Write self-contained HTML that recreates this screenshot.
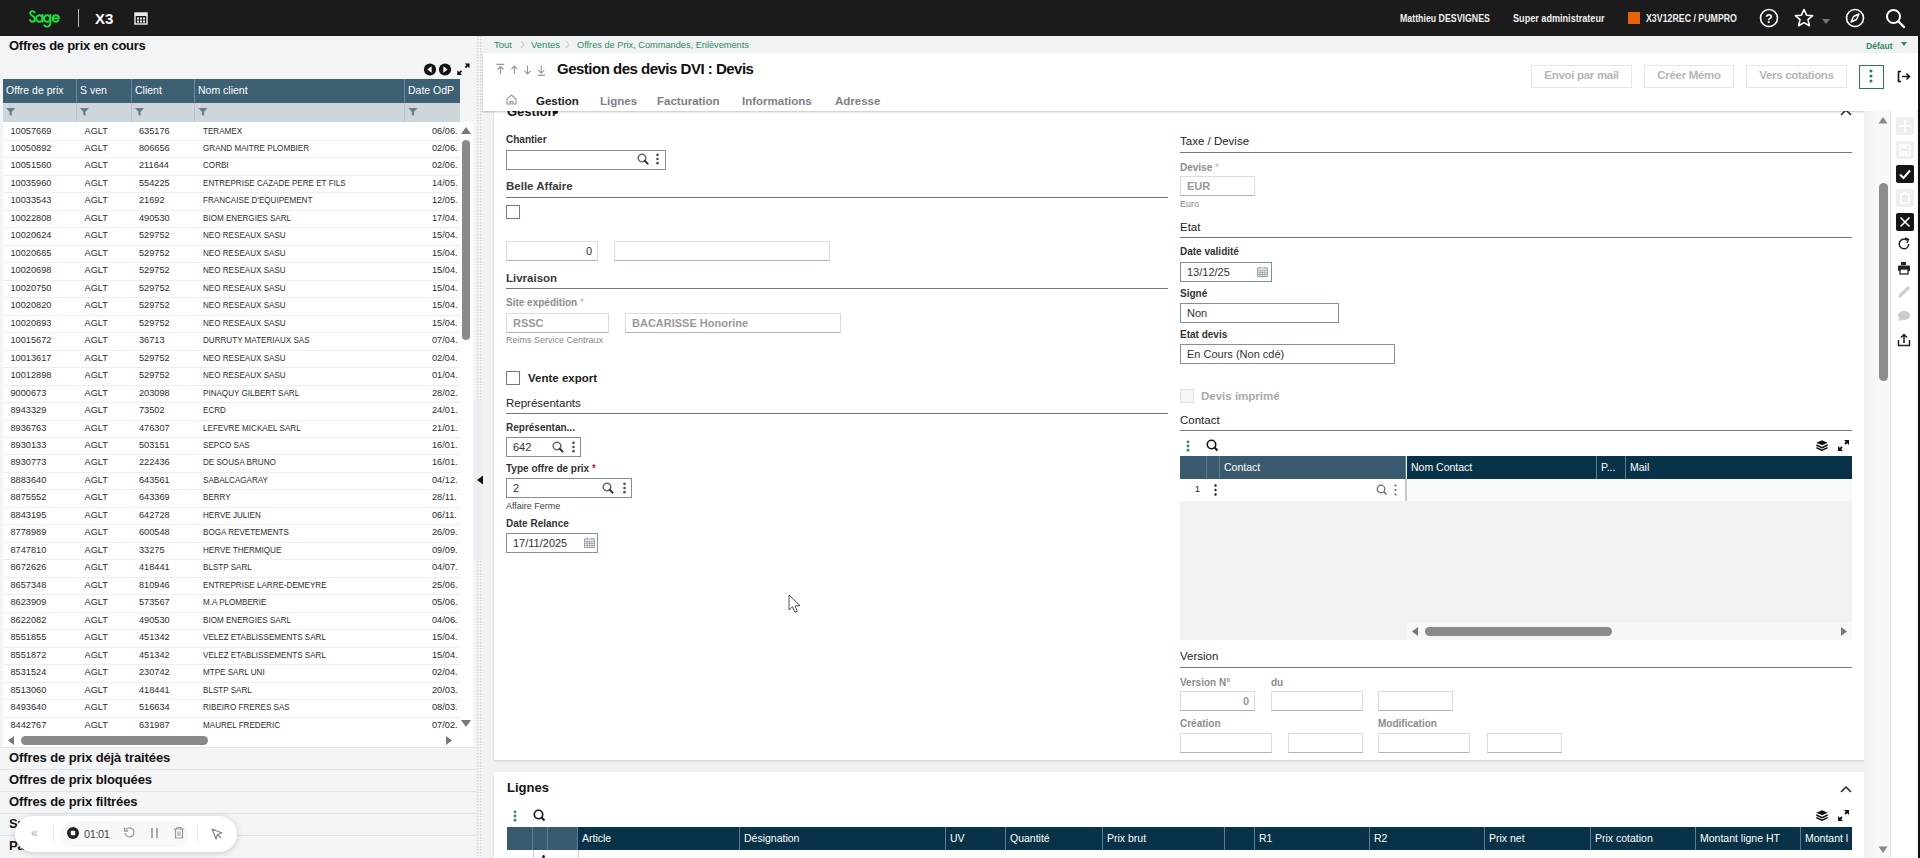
<!DOCTYPE html>
<html><head><meta charset="utf-8">
<style>
*{box-sizing:border-box;margin:0;padding:0}
html,body{width:1920px;height:858px;overflow:hidden;background:#f2f3f4;font-family:"Liberation Sans",sans-serif;color:#222;position:relative}
.abs{position:absolute}
#top{position:absolute;left:0;top:0;width:1920px;height:36px;background:#1b1b1b}
#left{position:absolute;left:0;top:36px;width:476px;height:822px;background:#f3f4f6}
.lr{position:absolute;left:3px;width:457px;height:17.47px;background:#fff;border-bottom:1px solid #eceeef;font-size:9.2px;color:#2c2c2c;line-height:14.5px}
.lr span{position:absolute;top:0;white-space:nowrap}
.c1{left:7.5px}.c2{left:81.5px}.c3{left:136px}.c4{left:200px;transform:scaleX(0.88);transform-origin:0 0}.c5{left:429px}
.th{position:absolute;top:79px;height:24px;background:#3e6074;color:#fff;font-size:10.5px;line-height:23px;padding-left:3px;border-right:1px solid #6d8795}
.tf{position:absolute;top:103px;height:19px;background:#cfd6db;border-right:1px solid #b9c3c9}
.sec{position:absolute;left:0;width:476px;height:22px;border-top:1px solid #e1e3e6;font-weight:bold;font-size:13px;line-height:19px;padding-left:9px;color:#111;letter-spacing:-0.1px}
</style></head><body>
<style>
.btn{border:1px solid #e4e6e8;color:#b3b6b9;font-size:11.5px;font-weight:bold;text-align:center;line-height:19px;background:#fff;white-space:nowrap;letter-spacing:-0.3px}
.tab{top:94.5px;font-size:11.5px;font-weight:bold;color:#7c8186;white-space:nowrap}
.lbl{position:absolute;margin-top:1px;font-size:10px;font-weight:bold;color:#333;white-space:nowrap}
.glbl{position:absolute;margin-top:1px;font-size:10px;font-weight:bold;color:#8c8c8c;white-space:nowrap}
.sect{position:absolute;margin-top:1px;font-size:11.5px;color:#222;white-space:nowrap}
.hr{position:absolute;height:1px;background:#777}
.inp{position:absolute;height:20px;border:1px solid #7f9099;border-bottom-width:1.5px;background:#fff;font-size:11px;color:#333;line-height:18px;padding-left:6px;white-space:nowrap}
.ginp{position:absolute;height:20px;border:1px solid #d8dde0;border-bottom:1.5px solid #a9b6bc;background:#fff;font-size:11px;color:#999;font-weight:bold;line-height:18px;padding-left:6px;white-space:nowrap}
.sub{position:absolute;font-size:9px;color:#888;white-space:nowrap}
.cb{position:absolute;width:14px;height:14px;border:1px solid #6d7d86;background:#fff}
</style>
<style>
.gh{position:absolute;top:456px;height:23px;background:#083248;color:#fff;font-size:10.5px;line-height:22px;padding-left:4px;border-right:1px solid #5d7d8e;white-space:nowrap}
.gh2{position:absolute;top:827px;height:23px;background:#083248;color:#fff;font-size:10.5px;line-height:22px;padding-left:4px;border-right:1px solid #5d7d8e;white-space:nowrap}
.tb{position:absolute;left:1896px;width:18px;height:18px;border-radius:2px;overflow:hidden}
.tb svg{display:block}
</style>

<div id="top">
  <svg class="abs" style="left:29px;top:10px" width="31" height="19" viewBox="0 0 31 19"><g fill="none" stroke="#1ee03c" stroke-width="1.9" stroke-linecap="round"><path d="M5.6 2.6 C5.2 1.6 4.4 1.1 3.4 1.1 C2.1 1.1 1.2 2 1.2 3.2 C1.2 4.5 2.3 5.2 3.5 5.9 C4.8 6.6 5.9 7.4 5.9 9.1 C5.9 10.7 4.8 11.8 3.5 11.8 C2.2 11.8 1.3 11 1.1 9.9"/><circle cx="10.4" cy="8.5" r="3.2"/><path d="M13.6 5 V11.8"/><circle cx="18.2" cy="8.5" r="3.2"/><path d="M21.4 5 V12.8 C21.4 15 20 16.6 18 16.6 C16.8 16.6 15.8 16 15.3 15.2"/><path d="M23.7 8.4 H29.9 C29.9 6.6 28.5 5.2 26.8 5.2 C25.1 5.2 23.7 6.6 23.7 8.5 C23.7 10.3 25.1 11.7 26.8 11.7 C27.9 11.7 28.8 11.2 29.4 10.4"/></g></svg>
  <div class="abs" style="left:78px;top:9px;width:1px;height:18px;background:#bbb"></div>
  <div class="abs" style="left:95px;top:10px;font-size:15px;font-weight:bold;color:#fff">X3</div>
  <svg class="abs" style="left:134px;top:11px" width="14" height="14" viewBox="0 0 14 14"><rect x="1" y="2" width="12" height="11" fill="none" stroke="#eee" stroke-width="1.4"/><rect x="1" y="2" width="12" height="3" fill="#eee"/><g fill="#eee"><rect x="3" y="6.5" width="2" height="2"/><rect x="6" y="6.5" width="2" height="2"/><rect x="9" y="6.5" width="2" height="2"/><rect x="3" y="9.5" width="2" height="2"/><rect x="6" y="9.5" width="2" height="2"/><rect x="9" y="9.5" width="2" height="2"/></g></svg>
  <div class="abs" style="left:1400px;top:13px;font-size:10px;color:#eee;font-weight:bold;transform:scaleX(0.88);transform-origin:0 0;white-space:nowrap">Matthieu DESVIGNES</div>
  <div class="abs" style="left:1513px;top:13px;font-size:10px;color:#eee;font-weight:bold;transform:scaleX(0.91);transform-origin:0 0;white-space:nowrap">Super administrateur</div>
  <div class="abs" style="left:1628px;top:12px;width:12px;height:12px;background:#e8620a"></div>
  <div class="abs" style="left:1646px;top:13px;font-size:10px;color:#eee;font-weight:bold;transform:scaleX(0.88);transform-origin:0 0;white-space:nowrap">X3V12REC / PUMPRO</div>
  <svg class="abs" style="left:1759px;top:8px" width="20" height="20" viewBox="0 0 20 20"><circle cx="10" cy="10" r="8.5" fill="none" stroke="#fff" stroke-width="1.6"/><text x="10" y="14.5" text-anchor="middle" font-size="12" font-weight="bold" fill="#fff" font-family="Liberation Sans">?</text></svg>
  <svg class="abs" style="left:1794px;top:8px" width="20" height="20" viewBox="0 0 20 20"><path d="M10 1.5 L12.6 7.2 L18.6 7.6 L14 11.6 L15.4 17.8 L10 14.6 L4.6 17.8 L6 11.6 L1.4 7.6 L7.4 7.2 Z" fill="none" stroke="#fff" stroke-width="1.6" stroke-linejoin="round"/></svg>
  <svg class="abs" style="left:1822px;top:19px" width="8" height="5" viewBox="0 0 8 5"><path d="M0 0 L8 0 L4 5Z" fill="#777"/></svg>
  <svg class="abs" style="left:1845px;top:8px" width="20" height="20" viewBox="0 0 20 20"><circle cx="10" cy="10" r="8.5" fill="none" stroke="#fff" stroke-width="1.6"/><path d="M14 6 L11.5 11.5 L6 14 L8.5 8.5 Z" fill="none" stroke="#fff" stroke-width="1.4" stroke-linejoin="round"/></svg>
  <svg class="abs" style="left:1885px;top:8px" width="21" height="21" viewBox="0 0 21 21"><circle cx="8.5" cy="8.5" r="6.5" fill="none" stroke="#fff" stroke-width="2"/><path d="M13.5 13.5 L19 19" stroke="#fff" stroke-width="2.4" stroke-linecap="round"/></svg>
</div>

<div id="left">
  <div class="abs" style="left:9px;top:2px;font-size:13px;font-weight:bold;color:#111;letter-spacing:-0.25px">Offres de prix en cours</div>
  <svg class="abs" style="left:422px;top:26px" width="52" height="16" viewBox="0 0 52 16">
    <circle cx="8" cy="7.5" r="6.1" fill="#111"/><path d="M9.6 4.3 L5.4 7.5 L9.6 10.7Z" fill="#fff"/>
    <circle cx="23" cy="7.5" r="6.1" fill="#111"/><path d="M21.4 4.3 L25.6 7.5 L21.4 10.7Z" fill="#fff"/>
    <path d="M35.3 13 L40 13 L35.3 8.3 Z" fill="#111"/><path d="M36 12.3 L39.5 8.8" stroke="#111" stroke-width="1.8"/>
    <path d="M47.5 1.5 L42.8 1.5 L47.5 6.2 Z" fill="#111"/><path d="M46.8 2.2 L43.3 5.7" stroke="#111" stroke-width="1.8"/>
  </svg>
</div>
<div class="th" style="left:3px;width:74px">Offre de prix</div>
<div class="th" style="left:77px;width:55px">S ven</div>
<div class="th" style="left:132px;width:63px">Client</div>
<div class="th" style="left:195px;width:210px">Nom client</div>
<div class="th" style="left:405px;width:55px;border-right:none">Date OdP</div>
<div class="tf" style="left:3px;width:74px"></div>
<div class="tf" style="left:77px;width:55px"></div>
<div class="tf" style="left:132px;width:63px"></div>
<div class="tf" style="left:195px;width:210px"></div>
<div class="tf" style="left:405px;width:55px;border-right:none"></div>

<div id="rowsbg" class="abs" style="left:3px;top:122px;width:470px;height:625px;background:#fff"></div>

<div class="lr" style="top:123.53px"><span class="c1">10057669</span><span class="c2">AGLT</span><span class="c3">635176</span><span class="c4">TERAMEX</span><span class="c5">06/06.</span></div>
<div class="lr" style="top:141.00px"><span class="c1">10050892</span><span class="c2">AGLT</span><span class="c3">806656</span><span class="c4">GRAND MAITRE PLOMBIER</span><span class="c5">02/06.</span></div>
<div class="lr" style="top:158.47px"><span class="c1">10051560</span><span class="c2">AGLT</span><span class="c3">211644</span><span class="c4">CORBI</span><span class="c5">02/06.</span></div>
<div class="lr" style="top:175.94px"><span class="c1">10035960</span><span class="c2">AGLT</span><span class="c3">554225</span><span class="c4">ENTREPRISE CAZADE PERE ET FILS</span><span class="c5">14/05.</span></div>
<div class="lr" style="top:193.41px"><span class="c1">10033543</span><span class="c2">AGLT</span><span class="c3">21692</span><span class="c4">FRANCAISE D'EQUIPEMENT</span><span class="c5">12/05.</span></div>
<div class="lr" style="top:210.88px"><span class="c1">10022808</span><span class="c2">AGLT</span><span class="c3">490530</span><span class="c4">BIOM ENERGIES SARL</span><span class="c5">17/04.</span></div>
<div class="lr" style="top:228.35px"><span class="c1">10020624</span><span class="c2">AGLT</span><span class="c3">529752</span><span class="c4">NEO RESEAUX SASU</span><span class="c5">15/04.</span></div>
<div class="lr" style="top:245.82px"><span class="c1">10020665</span><span class="c2">AGLT</span><span class="c3">529752</span><span class="c4">NEO RESEAUX SASU</span><span class="c5">15/04.</span></div>
<div class="lr" style="top:263.29px"><span class="c1">10020698</span><span class="c2">AGLT</span><span class="c3">529752</span><span class="c4">NEO RESEAUX SASU</span><span class="c5">15/04.</span></div>
<div class="lr" style="top:280.76px"><span class="c1">10020750</span><span class="c2">AGLT</span><span class="c3">529752</span><span class="c4">NEO RESEAUX SASU</span><span class="c5">15/04.</span></div>
<div class="lr" style="top:298.23px"><span class="c1">10020820</span><span class="c2">AGLT</span><span class="c3">529752</span><span class="c4">NEO RESEAUX SASU</span><span class="c5">15/04.</span></div>
<div class="lr" style="top:315.70px"><span class="c1">10020893</span><span class="c2">AGLT</span><span class="c3">529752</span><span class="c4">NEO RESEAUX SASU</span><span class="c5">15/04.</span></div>
<div class="lr" style="top:333.17px"><span class="c1">10015672</span><span class="c2">AGLT</span><span class="c3">36713</span><span class="c4">DURRUTY MATERIAUX SAS</span><span class="c5">07/04.</span></div>
<div class="lr" style="top:350.64px"><span class="c1">10013617</span><span class="c2">AGLT</span><span class="c3">529752</span><span class="c4">NEO RESEAUX SASU</span><span class="c5">02/04.</span></div>
<div class="lr" style="top:368.11px"><span class="c1">10012898</span><span class="c2">AGLT</span><span class="c3">529752</span><span class="c4">NEO RESEAUX SASU</span><span class="c5">01/04.</span></div>
<div class="lr" style="top:385.58px"><span class="c1">9000673</span><span class="c2">AGLT</span><span class="c3">203098</span><span class="c4">PINAQUY GILBERT SARL</span><span class="c5">28/02.</span></div>
<div class="lr" style="top:403.05px"><span class="c1">8943329</span><span class="c2">AGLT</span><span class="c3">73502</span><span class="c4">ECRD</span><span class="c5">24/01.</span></div>
<div class="lr" style="top:420.52px"><span class="c1">8936763</span><span class="c2">AGLT</span><span class="c3">476307</span><span class="c4">LEFEVRE MICKAEL SARL</span><span class="c5">21/01.</span></div>
<div class="lr" style="top:437.99px"><span class="c1">8930133</span><span class="c2">AGLT</span><span class="c3">503151</span><span class="c4">SEPCO SAS</span><span class="c5">16/01.</span></div>
<div class="lr" style="top:455.46px"><span class="c1">8930773</span><span class="c2">AGLT</span><span class="c3">222436</span><span class="c4">DE SOUSA BRUNO</span><span class="c5">16/01.</span></div>
<div class="lr" style="top:472.93px"><span class="c1">8883640</span><span class="c2">AGLT</span><span class="c3">643561</span><span class="c4">SABALCAGARAY</span><span class="c5">04/12.</span></div>
<div class="lr" style="top:490.40px"><span class="c1">8875552</span><span class="c2">AGLT</span><span class="c3">643369</span><span class="c4">BERRY</span><span class="c5">28/11.</span></div>
<div class="lr" style="top:507.87px"><span class="c1">8843195</span><span class="c2">AGLT</span><span class="c3">642728</span><span class="c4">HERVE JULIEN</span><span class="c5">06/11.</span></div>
<div class="lr" style="top:525.34px"><span class="c1">8778989</span><span class="c2">AGLT</span><span class="c3">600548</span><span class="c4">BOGA REVETEMENTS</span><span class="c5">26/09.</span></div>
<div class="lr" style="top:542.81px"><span class="c1">8747810</span><span class="c2">AGLT</span><span class="c3">33275</span><span class="c4">HERVE THERMIQUE</span><span class="c5">09/09.</span></div>
<div class="lr" style="top:560.28px"><span class="c1">8672626</span><span class="c2">AGLT</span><span class="c3">418441</span><span class="c4">BLSTP SARL</span><span class="c5">04/07.</span></div>
<div class="lr" style="top:577.75px"><span class="c1">8657348</span><span class="c2">AGLT</span><span class="c3">810946</span><span class="c4">ENTREPRISE LARRE-DEMEYRE</span><span class="c5">25/06.</span></div>
<div class="lr" style="top:595.22px"><span class="c1">8623909</span><span class="c2">AGLT</span><span class="c3">573567</span><span class="c4">M.A PLOMBERIE</span><span class="c5">05/06.</span></div>
<div class="lr" style="top:612.69px"><span class="c1">8622082</span><span class="c2">AGLT</span><span class="c3">490530</span><span class="c4">BIOM ENERGIES SARL</span><span class="c5">04/06.</span></div>
<div class="lr" style="top:630.16px"><span class="c1">8551855</span><span class="c2">AGLT</span><span class="c3">451342</span><span class="c4">VELEZ ETABLISSEMENTS SARL</span><span class="c5">15/04.</span></div>
<div class="lr" style="top:647.63px"><span class="c1">8551872</span><span class="c2">AGLT</span><span class="c3">451342</span><span class="c4">VELEZ ETABLISSEMENTS SARL</span><span class="c5">15/04.</span></div>
<div class="lr" style="top:665.10px"><span class="c1">8531524</span><span class="c2">AGLT</span><span class="c3">230742</span><span class="c4">MTPE SARL UNI</span><span class="c5">02/04.</span></div>
<div class="lr" style="top:682.57px"><span class="c1">8513060</span><span class="c2">AGLT</span><span class="c3">418441</span><span class="c4">BLSTP SARL</span><span class="c5">20/03.</span></div>
<div class="lr" style="top:700.04px"><span class="c1">8493640</span><span class="c2">AGLT</span><span class="c3">516634</span><span class="c4">RIBEIRO FRERES SAS</span><span class="c5">08/03.</span></div>
<div class="lr" style="top:717.51px"><span class="c1">8442767</span><span class="c2">AGLT</span><span class="c3">631987</span><span class="c4">MAUREL FREDERIC</span><span class="c5">07/02.</span></div>
<svg class="abs" style="left:0px;top:108px" width="430" height="9" viewBox="0 0 430 9"><g fill="#687f8e"><path d="M6.2 0 H15.2 L11.8 4 V8 L9.6 6.8 V4Z"/><path d="M79.9 0 H88.9 L85.5 4 V8 L83.3 6.8 V4Z"/><path d="M135.0 0 H144.0 L140.6 4 V8 L138.4 6.8 V4Z"/><path d="M198.5 0 H207.5 L204.1 4 V8 L201.9 6.8 V4Z"/><path d="M408.4 0 H417.4 L414.0 4 V8 L411.8 6.8 V4Z"/></g></svg>
<!-- vertical scrollbar -->
<div class="abs" style="left:460px;top:122px;width:13px;height:611px;background:#fff"></div>
<svg class="abs" style="left:460px;top:125px" width="12" height="10" viewBox="0 0 12 10"><path d="M1 9 L6 2 L11 9Z" fill="#777"/></svg>
<div class="abs" style="left:462px;top:140px;width:8px;height:200px;border-radius:4px;background:#8a8a8a"></div>
<svg class="abs" style="left:460px;top:719px" width="12" height="10" viewBox="0 0 12 10"><path d="M1 1 L6 8 L11 1Z" fill="#777"/></svg>
<!-- horizontal scrollbar -->
<div class="abs" style="left:3px;top:733px;width:470px;height:14px;background:#fff"></div>
<svg class="abs" style="left:7px;top:736px" width="8" height="9" viewBox="0 0 8 9"><path d="M7 0 L1 4.5 L7 9Z" fill="#777"/></svg>
<div class="abs" style="left:21px;top:736px;width:187px;height:9px;border-radius:4.5px;background:#8a8a8a"></div>
<svg class="abs" style="left:445px;top:736px" width="8" height="9" viewBox="0 0 8 9"><path d="M1 0 L7 4.5 L1 9Z" fill="#777"/></svg>
<div class="sec" style="top:747px">Offres de prix déjà traitées</div>
<div class="sec" style="top:769px">Offres de prix bloquées</div>
<div class="sec" style="top:791px">Offres de prix filtrées</div>
<div class="sec" style="top:813px">Suivi</div>
<div class="sec" style="top:835px">Paramètres</div>
<!-- record widget -->
<div class="abs" style="left:15px;top:816px;width:222px;height:36px;border-radius:18px;background:#fff;box-shadow:0 1px 6px rgba(0,0,0,0.18)">
  <div class="abs" style="left:16px;top:10px;font-size:12px;color:#aaa">«</div>
  <div class="abs" style="left:38px;top:10px;width:1px;height:16px;background:#e5e5e5"></div>
  <div class="abs" style="left:45px;top:5px;width:128px;height:26px;border-radius:13px;background:#f8f8f9"></div>
  <svg class="abs" style="left:51px;top:10px" width="14" height="14" viewBox="0 0 14 14"><circle cx="7" cy="7" r="6" fill="#222"/><rect x="4.8" y="4.8" width="4.4" height="4.4" rx="0.8" fill="#fff"/></svg>
  <div class="abs" style="left:69px;top:12px;font-size:11px;color:#4a4a4a;letter-spacing:-0.4px">01:01</div>
  <svg class="abs" style="left:108px;top:10px" width="13" height="13" viewBox="0 0 13 13"><path d="M3 3.5 A4.5 4.5 0 1 1 2 7" fill="none" stroke="#999" stroke-width="1.3"/><path d="M1.5 1.5 L1.5 5 L5 5" fill="none" stroke="#999" stroke-width="1.3"/></svg>
  <div class="abs" style="left:136px;top:12px;width:1.6px;height:10px;background:#aaa"></div>
  <div class="abs" style="left:141px;top:12px;width:1.6px;height:10px;background:#aaa"></div>
  <svg class="abs" style="left:158px;top:10px" width="12" height="13" viewBox="0 0 12 13"><path d="M1 3 H11 M4 3 V1.5 H8 V3 M2.5 3 V12 H9.5 V3" fill="none" stroke="#999" stroke-width="1.2"/><path d="M5 5.5 V10 M7 5.5 V10" stroke="#999" stroke-width="1"/></svg>
  <div class="abs" style="left:182px;top:10px;width:1px;height:16px;background:#e5e5e5"></div>
  <svg class="abs" style="left:195px;top:11px" width="14" height="14" viewBox="0 0 14 14"><path d="M2 2 L12 6 L7.5 7.5 L6 12Z" fill="none" stroke="#888" stroke-width="1.3" stroke-linejoin="round"/><path d="M7.5 7.5 L11 11" stroke="#888" stroke-width="1.3"/></svg>
</div>

<!-- splitter -->
<div class="abs" style="left:476px;top:36px;width:18px;height:822px;background:#f2f3f5"></div>
<svg class="abs" style="left:477px;top:36px" width="6" height="822"><defs><pattern id="dots" width="3" height="3" patternUnits="userSpaceOnUse"><rect x="0" y="0" width="1.5" height="1.5" fill="#d3d6da"/></pattern></defs><rect width="6" height="822" fill="url(#dots)"/></svg>
<div class="abs" style="left:474px;top:400px;width:12px;height:160px;background:#eceef1"></div>
<svg class="abs" style="left:476px;top:475px" width="8" height="10" viewBox="0 0 8 10"><path d="M7 0.5 L1 5 L7 9.5Z" fill="#111"/></svg>
<!-- main bg -->
<div class="abs" style="left:483px;top:36px;width:1437px;height:822px;background:#f0f1f2"></div>
<!-- breadcrumb -->
<div class="abs" style="left:483px;top:36px;width:1437px;height:17px;background:#f1f2f3"></div>
<div class="abs" style="left:494px;top:39px;font-size:9.5px;color:#2f8a5f;white-space:nowrap">Tout</div>
<svg class="abs" style="left:520px;top:40px" width="5" height="9" viewBox="0 0 5 9"><path d="M1 1 L4 4.5 L1 8" fill="none" stroke="#c4c4c4" stroke-width="1"/></svg>
<div class="abs" style="left:531px;top:39px;font-size:9.5px;color:#2f8a5f;white-space:nowrap">Ventes</div>
<svg class="abs" style="left:565px;top:40px" width="5" height="9" viewBox="0 0 5 9"><path d="M1 1 L4 4.5 L1 8" fill="none" stroke="#c4c4c4" stroke-width="1"/></svg>
<div class="abs" style="left:577px;top:39px;font-size:9.5px;color:#2f8a5f;white-space:nowrap;transform:scaleX(0.97);transform-origin:0 0">Offres de Prix, Commandes, Enlèvements</div>
<div class="abs" style="left:1866px;top:40px;font-size:9.5px;color:#2f8a5f;font-weight:bold;transform:scaleX(0.9);transform-origin:0 0">Défaut</div>
<svg class="abs" style="left:1901px;top:42px" width="6" height="4" viewBox="0 0 6 4"><path d="M0 0 H6 L3 4Z" fill="#2f8a5f"/></svg>
<!-- main card 1 -->
<div class="abs" style="left:494px;top:100px;width:1370px;height:660px;background:#fff;box-shadow:0 1px 2px rgba(0,0,0,0.15)"></div>
<div class="abs" style="left:507px;top:104px;font-size:13px;font-weight:bold;color:#111">Gestion</div>
<div id="gdot" class="abs" style="left:553px;top:109px;width:5px;height:5px;border-radius:50%;background:#111"></div>
<svg class="abs" style="left:1840px;top:108px" width="12" height="8" viewBox="0 0 12 8"><path d="M1 7 L6 2 L11 7" fill="none" stroke="#222" stroke-width="1.5"/></svg>
<!-- header white -->
<div class="abs" style="left:483px;top:53px;width:1435px;height:58px;background:#fff;box-shadow:0 1px 2px rgba(0,0,0,0.25)"></div>
<div class="abs" style="left:1918px;top:36px;width:2px;height:822px;background:#111"></div>
<svg class="abs" style="left:495px;top:63px" width="52" height="14" viewBox="0 0 52 14"><g stroke="#8d999c" stroke-width="1.1" fill="none"><path d="M1.5 1.4 H9.2 M5.4 11.2 V3.6 M2.4 6.5 L5.4 3.5 L8.4 6.5"/><path d="M19.4 11 V3.2 M16.4 6.2 L19.4 3.1 L22.4 6.2"/><path d="M32.5 2.4 V10.8 M29.5 7.8 L32.5 10.9 L35.5 7.8"/><path d="M46.25 2.4 V10.2 M43.25 7.2 L46.25 10.3 L49.25 7.2 M42.7 12.4 H50"/></g></svg>
<div class="abs" style="left:557px;top:60px;font-size:15px;font-weight:bold;color:#111;white-space:nowrap;letter-spacing:-0.5px">Gestion des devis DVI : Devis</div>
<div class="abs btn" style="left:1531px;top:65px;width:101px;height:23px">Envoi par mail</div>
<div class="abs btn" style="left:1644px;top:65px;width:90px;height:23px">Créer Mémo</div>
<div class="abs btn" style="left:1746px;top:65px;width:101px;height:23px">Vers cotations</div>
<div class="abs" style="left:1859px;top:65px;width:25px;height:24px;border:1.5px solid #2a7a4e"></div>
<svg class="abs" style="left:1869px;top:69px" width="4" height="14" viewBox="0 0 4 14"><circle cx="2" cy="2" r="1.5" fill="#2a7a4e"/><circle cx="2" cy="7" r="1.5" fill="#2a7a4e"/><circle cx="2" cy="12" r="1.5" fill="#2a7a4e"/></svg>
<svg class="abs" style="left:1897px;top:70px" width="14" height="13" viewBox="0 0 14 13"><path d="M4 1.5 H1.5 V11.5 H4" fill="none" stroke="#111" stroke-width="1.6"/><path d="M5 6.5 H12.5 M9.5 3.5 L12.5 6.5 L9.5 9.5" fill="none" stroke="#111" stroke-width="1.6"/></svg>
<!-- tabs -->
<svg class="abs" style="left:506px;top:94px" width="11" height="11" viewBox="0 0 11 11"><path d="M1 10 V5 L5.5 1 L10 5 V10 Z M4 10 V7.5 H7 V10" fill="none" stroke="#999" stroke-width="1.1"/></svg>
<div class="abs tab" style="left:536px;color:#222">Gestion</div>
<div class="abs tab" style="left:600px">Lignes</div>
<div class="abs tab" style="left:657px">Facturation</div>
<div class="abs tab" style="left:742px">Informations</div>
<div class="abs tab" style="left:835px">Adresse</div>

<!-- left column -->
<div class="lbl" style="left:506px;top:133px">Chantier</div>
<div class="inp" style="left:506px;top:150px;width:160px"></div>
<svg class="abs" style="left:637px;top:153px" width="12" height="12" viewBox="0 0 12 12"><circle cx="5" cy="5" r="3.8" fill="none" stroke="#6a6a6a" stroke-width="1.5"/><path d="M7.8 7.8 L10.6 10.6" stroke="#333" stroke-width="2" stroke-linecap="round"/></svg>
<svg class="abs" style="left:656px;top:153px" width="3" height="12" viewBox="0 0 3 12"><circle cx="1.5" cy="1.8" r="1.35" fill="#555"/><circle cx="1.5" cy="6" r="1.35" fill="#555"/><circle cx="1.5" cy="10.2" r="1.35" fill="#555"/></svg>
<div class="sect" style="left:506px;top:179px;font-weight:bold;color:#3a3a3a">Belle Affaire</div>
<div class="hr" style="left:506px;top:197px;width:662px"></div>
<div class="cb" style="left:506px;top:205px"></div>
<div class="ginp" style="left:506px;top:241px;width:92px;text-align:right;padding-right:5px;color:#333;font-weight:normal">0</div>
<div class="ginp" style="left:614px;top:241px;width:216px"></div>
<div class="sect" style="left:506px;top:271px;font-weight:bold;color:#3a3a3a">Livraison</div>
<div class="hr" style="left:506px;top:288px;width:662px"></div>
<div class="glbl" style="left:506px;top:296px">Site expédition <span style="color:#ccc">*</span></div>
<div class="ginp" style="left:506px;top:313px;width:103px">RSSC</div>
<div class="ginp" style="left:625px;top:313px;width:216px">BACARISSE Honorine</div>
<div class="sub" style="left:506px;top:335px">Reims Service Centraux</div>
<div class="cb" style="left:506px;top:371px"></div>
<div class="sect" style="left:528px;top:371px;font-weight:bold">Vente export</div>
<div class="sect" style="left:506px;top:396px">Représentants</div>
<div class="hr" style="left:506px;top:413px;width:662px"></div>
<div class="lbl" style="left:506px;top:421px">Représentan...</div>
<div class="inp" style="left:506px;top:437px;width:75px">642</div>
<svg class="abs" style="left:552px;top:441px" width="12" height="12" viewBox="0 0 12 12"><circle cx="5" cy="5" r="3.8" fill="none" stroke="#6a6a6a" stroke-width="1.5"/><path d="M7.8 7.8 L10.6 10.6" stroke="#333" stroke-width="2" stroke-linecap="round"/></svg>
<svg class="abs" style="left:572px;top:441px" width="3" height="12" viewBox="0 0 3 12"><circle cx="1.5" cy="1.8" r="1.35" fill="#555"/><circle cx="1.5" cy="6" r="1.35" fill="#555"/><circle cx="1.5" cy="10.2" r="1.35" fill="#555"/></svg>
<div class="lbl" style="left:506px;top:462px">Type offre de prix <span style="color:#c2185b">*</span></div>
<div class="inp" style="left:506px;top:478px;width:126px">2</div>
<svg class="abs" style="left:602px;top:482px" width="12" height="12" viewBox="0 0 12 12"><circle cx="5" cy="5" r="3.8" fill="none" stroke="#6a6a6a" stroke-width="1.5"/><path d="M7.8 7.8 L10.6 10.6" stroke="#333" stroke-width="2" stroke-linecap="round"/></svg>
<svg class="abs" style="left:623px;top:482px" width="3" height="12" viewBox="0 0 3 12"><circle cx="1.5" cy="1.8" r="1.35" fill="#555"/><circle cx="1.5" cy="6" r="1.35" fill="#555"/><circle cx="1.5" cy="10.2" r="1.35" fill="#555"/></svg>
<div class="sub" style="left:506px;top:501px;color:#444">Affaire Ferme</div>
<div class="lbl" style="left:506px;top:517px">Date Relance</div>
<div class="inp" style="left:506px;top:533px;width:92px">17/11/2025</div>
<svg class="abs" style="left:584px;top:537px" width="11" height="11" viewBox="0 0 11 11"><g fill="none" stroke="#93a3aa" stroke-width="0.9"><rect x="0.5" y="2" width="10" height="8.5"/><path d="M0.5 4.2 H10.5 M0.5 6.3 H10.5 M0.5 8.4 H10.5 M3 4.2 V10.5 M5.5 4.2 V10.5 M8 4.2 V10.5 M3 0.5 V2.8 M8 0.5 V2.8"/></g></svg>
<!-- mouse cursor -->
<svg class="abs" style="left:787.5px;top:593.5px" width="15" height="21" viewBox="0 0 15 21"><path d="M1 1 L1 16 L4.4 12.8 L7 18.3 L9.4 17.2 L7 12 L12 11.6 Z" fill="#fff" stroke="#3a3a4a" stroke-width="0.9" stroke-linejoin="round"/></svg>
<div class="hr" style="left:1160px;top:197px;width:8px"></div>
<div class="hr" style="left:1160px;top:288px;width:8px"></div>
<!-- right column -->
<div class="sect" style="left:1180px;top:134px">Taxe / Devise</div>
<div class="hr" style="left:1180px;top:152px;width:672px"></div>
<div class="glbl" style="left:1180px;top:161px">Devise <span style="color:#ccc">*</span></div>
<div class="ginp" style="left:1180px;top:176px;width:75px">EUR</div>
<div class="sub" style="left:1180px;top:199px">Euro</div>
<div class="sect" style="left:1180px;top:220px">Etat</div>
<div class="hr" style="left:1180px;top:237px;width:672px"></div>
<div class="lbl" style="left:1180px;top:245px">Date validité</div>
<div class="inp" style="left:1180px;top:262px;width:92px">13/12/25</div>
<svg class="abs" style="left:1257px;top:266px" width="11" height="11" viewBox="0 0 11 11"><g fill="none" stroke="#93a3aa" stroke-width="0.9"><rect x="0.5" y="2" width="10" height="8.5"/><path d="M0.5 4.2 H10.5 M0.5 6.3 H10.5 M0.5 8.4 H10.5 M3 4.2 V10.5 M5.5 4.2 V10.5 M8 4.2 V10.5 M3 0.5 V2.8 M8 0.5 V2.8"/></g></svg>
<div class="lbl" style="left:1180px;top:287px">Signé</div>
<div class="inp" style="left:1180px;top:303px;width:159px">Non</div>
<div class="lbl" style="left:1180px;top:328px">Etat devis</div>
<div class="inp" style="left:1180px;top:344px;width:215px">En Cours (Non cdé)</div>
<div class="cb" style="left:1180px;top:389px;border-color:#dfe2e4;background:#f7f7f7"></div>
<div class="sect" style="left:1201px;top:389px;font-weight:bold;color:#aaa">Devis imprimé</div>
<div class="sect" style="left:1180px;top:413px">Contact</div>
<div class="hr" style="left:1180px;top:430px;width:672px"></div>
<svg class="abs" style="left:1186px;top:440px" width="4" height="12" viewBox="0 0 4 12"><circle cx="2" cy="1.8" r="1.4" fill="#2a8a5e"/><circle cx="2" cy="6" r="1.4" fill="#2a8a5e"/><circle cx="2" cy="10.2" r="1.4" fill="#2a8a5e"/></svg>
<svg class="abs" style="left:1206px;top:439px" width="13" height="13" viewBox="0 0 13 13"><circle cx="5.5" cy="5.5" r="4.2" fill="none" stroke="#111" stroke-width="1.6"/><path d="M8.5 8.5 L11.5 11.5" stroke="#111" stroke-width="2"/></svg>
<svg class="abs" style="left:1816px;top:440px" width="12" height="11" viewBox="0 0 12 11"><path d="M6 0.3 L11.7 2.8 L6 5.3 L0.3 2.8Z" fill="#111"/><path d="M0.3 5 L6 7.6 L11.7 5" fill="none" stroke="#111" stroke-width="1.5"/><path d="M0.3 7.6 L6 10.3 L11.7 7.6" fill="none" stroke="#111" stroke-width="1.5"/></svg>
<svg class="abs" style="left:1837px;top:439px" width="13" height="13" viewBox="0 0 13 13"><path d="M1 12 L1 7 L6 12 Z" fill="#111"/><path d="M2.5 10.5 L5 8" stroke="#111" stroke-width="1.8"/><path d="M12 1 L12 6 L7 1 Z" fill="#111"/><path d="M10.5 2.5 L8 5" stroke="#111" stroke-width="1.8"/></svg>
<!-- contact grid -->
<div class="abs" style="left:1180px;top:456px;width:672px;height:184px;background:#f2f2f2"></div>
<div class="gh" style="left:1180px;width:27px;background:#395a6e"></div>
<div class="gh" style="left:1207px;width:13px;background:#395a6e"></div>
<div class="gh" style="left:1220px;width:186px;background:#395a6e">Contact</div>
<div class="gh" style="left:1407px;width:190px">Nom Contact</div>
<div class="gh" style="left:1597px;width:29px">P...</div>
<div class="gh" style="left:1626px;width:226px;border-right:none">Mail</div>
<div class="abs" style="left:1180px;top:479px;width:227px;height:22px;background:#fff"></div>
<div class="abs" style="left:1407px;top:479px;width:445px;height:22px;background:#f8f9f9"></div>
<div class="abs" style="left:1405px;top:479px;width:2px;height:22px;background:#c9c9c9"></div>
<div class="abs" style="left:1195px;top:484px;font-size:9px;color:#222">1</div>
<svg class="abs" style="left:1214px;top:484px" width="3" height="12" viewBox="0 0 3 12"><circle cx="1.5" cy="1.5" r="1.2" fill="#222"/><circle cx="1.5" cy="6" r="1.2" fill="#222"/><circle cx="1.5" cy="10.5" r="1.2" fill="#222"/></svg>
<svg class="abs" style="left:1376px;top:484px" width="12" height="12" viewBox="0 0 12 12"><circle cx="5" cy="5" r="3.8" fill="none" stroke="#666" stroke-width="1.2"/><path d="M7.8 7.8 L10.5 10.5" stroke="#666" stroke-width="1.5"/></svg>
<svg class="abs" style="left:1394px;top:484px" width="3" height="12" viewBox="0 0 3 12"><circle cx="1.5" cy="1.5" r="1.1" fill="#666"/><circle cx="1.5" cy="6" r="1.1" fill="#666"/><circle cx="1.5" cy="10.5" r="1.1" fill="#666"/></svg>
<div class="abs" style="left:1407px;top:622px;width:445px;height:18px;background:#f7f7f7"></div>
<svg class="abs" style="left:1411px;top:627px" width="8" height="9" viewBox="0 0 8 9"><path d="M7 0 L1 4.5 L7 9Z" fill="#777"/></svg>
<div class="abs" style="left:1425px;top:627px;width:187px;height:9px;border-radius:4.5px;background:#8a8a8a"></div>
<svg class="abs" style="left:1840px;top:627px" width="8" height="9" viewBox="0 0 8 9"><path d="M1 0 L7 4.5 L1 9Z" fill="#777"/></svg>
<!-- version -->
<div class="sect" style="left:1180px;top:649px">Version</div>
<div class="hr" style="left:1180px;top:667px;width:672px"></div>
<div class="glbl" style="left:1180px;top:676px">Version N°</div>
<div class="glbl" style="left:1271px;top:676px">du</div>
<div class="ginp" style="left:1180px;top:691px;width:75px;text-align:right;padding-right:5px">0</div>
<div class="ginp" style="left:1271px;top:691px;width:92px"></div>
<div class="ginp" style="left:1378px;top:691px;width:75px"></div>
<div class="glbl" style="left:1180px;top:717px">Création</div>
<div class="glbl" style="left:1378px;top:717px">Modification</div>
<div class="ginp" style="left:1180px;top:733px;width:92px"></div>
<div class="ginp" style="left:1288px;top:733px;width:75px"></div>
<div class="ginp" style="left:1378px;top:733px;width:92px"></div>
<div class="ginp" style="left:1487px;top:733px;width:75px"></div>
<!-- card 2: Lignes -->
<div class="abs" style="left:494px;top:772px;width:1370px;height:90px;background:#fff;box-shadow:0 1px 2px rgba(0,0,0,0.15)"></div>
<div class="abs" style="left:507px;top:780px;font-size:13px;font-weight:bold;color:#111">Lignes</div>
<svg class="abs" style="left:1840px;top:785px" width="12" height="8" viewBox="0 0 12 8"><path d="M1 7 L6 2 L11 7" fill="none" stroke="#222" stroke-width="1.5"/></svg>
<svg class="abs" style="left:513px;top:810px" width="4" height="12" viewBox="0 0 4 12"><circle cx="2" cy="1.8" r="1.4" fill="#2a8a5e"/><circle cx="2" cy="6" r="1.4" fill="#2a8a5e"/><circle cx="2" cy="10.2" r="1.4" fill="#2a8a5e"/></svg>
<svg class="abs" style="left:533px;top:809px" width="13" height="13" viewBox="0 0 13 13"><circle cx="5.5" cy="5.5" r="4.2" fill="none" stroke="#111" stroke-width="1.6"/><path d="M8.5 8.5 L11.5 11.5" stroke="#111" stroke-width="2"/></svg>
<svg class="abs" style="left:1816px;top:810px" width="12" height="11" viewBox="0 0 12 11"><path d="M6 0.3 L11.7 2.8 L6 5.3 L0.3 2.8Z" fill="#111"/><path d="M0.3 5 L6 7.6 L11.7 5" fill="none" stroke="#111" stroke-width="1.5"/><path d="M0.3 7.6 L6 10.3 L11.7 7.6" fill="none" stroke="#111" stroke-width="1.5"/></svg>
<svg class="abs" style="left:1837px;top:809px" width="13" height="13" viewBox="0 0 13 13"><path d="M1 12 L1 7 L6 12 Z" fill="#111"/><path d="M2.5 10.5 L5 8" stroke="#111" stroke-width="1.8"/><path d="M12 1 L12 6 L7 1 Z" fill="#111"/><path d="M10.5 2.5 L8 5" stroke="#111" stroke-width="1.8"/></svg>
<div class="gh2" style="left:507px;width:26px;background:#395a6e"></div>
<div class="gh2" style="left:533px;width:15px;background:#395a6e"></div>
<div class="gh2" style="left:548px;width:30px;background:#395a6e"></div>
<div class="gh2" style="left:578px;width:162px">Article</div>
<div class="gh2" style="left:740px;width:206px">Désignation</div>
<div class="gh2" style="left:946px;width:60px">UV</div>
<div class="gh2" style="left:1006px;width:97px">Quantité</div>
<div class="gh2" style="left:1103px;width:122px">Prix brut</div>
<div class="gh2" style="left:1225px;width:30px"></div>
<div class="gh2" style="left:1255px;width:115px">R1</div>
<div class="gh2" style="left:1370px;width:115px">R2</div>
<div class="gh2" style="left:1485px;width:106px">Prix net</div>
<div class="gh2" style="left:1591px;width:105px">Prix cotation</div>
<div class="gh2" style="left:1696px;width:105px">Montant ligne HT</div>
<div class="gh2" style="left:1801px;width:51px;border-right:none;overflow:hidden">Montant l</div>
<!-- lrow -->
<div class="abs" style="left:533px;top:850px;width:1px;height:8px;background:#d0d0d0"></div>
<div class="abs" style="left:578px;top:850px;width:1px;height:8px;background:#d0d0d0"></div>
<div class="abs" style="left:542px;top:855px;width:3px;height:3px;border-radius:50%;background:#222"></div>
<!-- right scrollbar & toolbar -->
<div class="abs" style="left:1864px;top:111px;width:11px;height:747px;background:linear-gradient(to right,#efefef,#f6f6f6)"></div><div class="abs" style="left:1875px;top:111px;width:16px;height:747px;background:#f8f8f8;border-right:1px solid #e3e3e3"></div>
<svg class="abs" style="left:1878px;top:116px" width="10" height="8" viewBox="0 0 10 8"><path d="M0.5 7.5 L5 1 L9.5 7.5Z" fill="#888"/></svg>
<div class="abs" style="left:1879px;top:183px;width:9px;height:198px;border-radius:4.5px;background:#8d8d8d"></div>
<svg class="abs" style="left:1878px;top:846px" width="10" height="8" viewBox="0 0 10 8"><path d="M0.5 0.5 L5 7 L9.5 0.5Z" fill="#888"/></svg>
<div class="abs" style="left:1891px;top:111px;width:26px;height:747px;background:#fff"></div>
<div class="tb" style="top:117px;background:#eceeef"><svg width="18" height="18" viewBox="0 0 18 18"><path d="M9 3 V15 M3 9 H15" stroke="#fff" stroke-width="2"/></svg></div>
<div class="tb" style="top:141px;background:#eceeef"><svg width="18" height="18" viewBox="0 0 18 18"><path d="M4 4 H13 L14 5 V14 H4Z" fill="none" stroke="#fff" stroke-width="1.4"/><rect x="6" y="4.5" width="5" height="3" fill="#fff"/><rect x="6" y="10" width="6" height="3.5" fill="#fff"/></svg></div>
<div class="tb" style="top:165px;background:#161616"><svg width="18" height="18" viewBox="0 0 18 18"><path d="M4 9.5 L7.5 13 L14 5.5" fill="none" stroke="#fff" stroke-width="2"/></svg></div>
<div class="tb" style="top:189px;background:#eceeef"><svg width="18" height="18" viewBox="0 0 18 18"><path d="M5 5 H13 V14 H5Z M4 5 H14 M7 3.5 H11" fill="none" stroke="#fff" stroke-width="1.4"/></svg></div>
<div class="tb" style="top:213px;background:#161616"><svg width="18" height="18" viewBox="0 0 18 18"><path d="M4.5 4.5 L13.5 13.5 M13.5 4.5 L4.5 13.5" fill="none" stroke="#fff" stroke-width="1.6"/></svg></div>
<svg class="abs" style="left:1897px;top:237px" width="14" height="14" viewBox="0 0 14 14"><path d="M11.8 7 A4.8 4.8 0 1 1 10 3.2" fill="none" stroke="#222" stroke-width="1.5"/><path d="M8 1 L11.5 2.5 L10 6" fill="none" stroke="#222" stroke-width="1.5"/></svg>
<svg class="abs" style="left:1897px;top:261px" width="14" height="14" viewBox="0 0 14 14"><rect x="4" y="1" width="5" height="3" fill="#222"/><rect x="1" y="4.5" width="12" height="5.5" rx="1" fill="#222"/><rect x="3" y="8" width="8" height="5" fill="#fff" stroke="#222" stroke-width="1.3"/></svg>
<svg class="abs" style="left:1897px;top:285px" width="14" height="14" viewBox="0 0 14 14"><path d="M3.2 10.8 L10.8 3.2" stroke="#cfcfcf" stroke-width="3.6" stroke-linecap="round"/></svg>
<svg class="abs" style="left:1897px;top:309px" width="14" height="14" viewBox="0 0 14 14"><ellipse cx="7" cy="6.5" rx="6" ry="4.5" fill="#ccc"/><path d="M2.5 9 L1.5 12.5 L5 10.5Z" fill="#ccc"/></svg>
<svg class="abs" style="left:1897px;top:333px" width="14" height="14" viewBox="0 0 14 14"><path d="M1.5 7 V12.5 H12.5 V7" fill="none" stroke="#222" stroke-width="1.5"/><path d="M7 10 V1.5 M4 4.5 L7 1.5 L10 4.5" fill="none" stroke="#222" stroke-width="1.5"/></svg>

</body></html>
